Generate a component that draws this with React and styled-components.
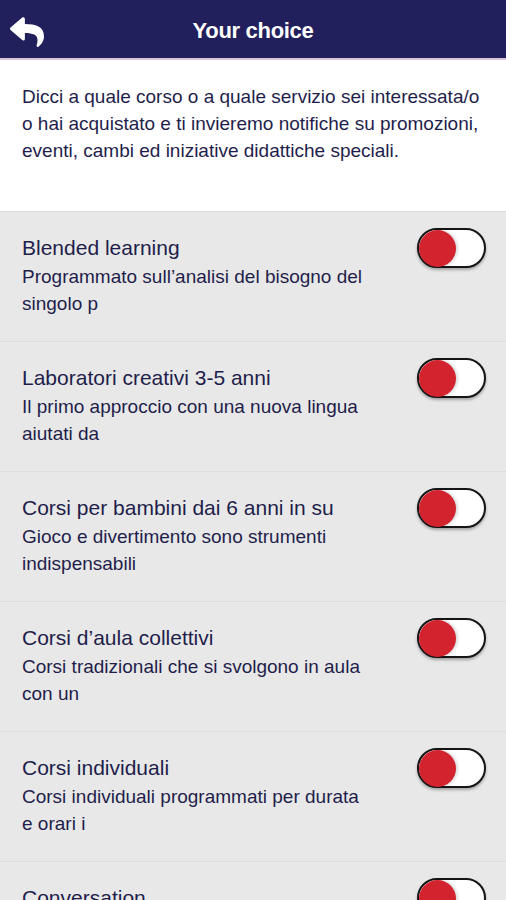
import React from 'react';
import styled, { createGlobalStyle } from 'styled-components';
import { FaReply } from 'react-icons/fa';

const GlobalStyle = createGlobalStyle`
  body {
    margin: 0;
    background: #e8e8e8;
    font-family: "Liberation Sans", Arial, Helvetica, sans-serif;
  }
`;

const Page = styled.div`
  width: 506px;
  min-height: 900px;
  background: #e8e8e8;
`;

const Header = styled.header`
  height: 60px;
  box-sizing: border-box;
  padding-top: 4px;
  background: #221f5d;
  border-bottom: 2px solid #dcc3d5;
  display: flex;
  align-items: center;
  justify-content: center;
  position: relative;
`;

const BackButton = styled.button`
  position: absolute;
  left: 10px;
  top: 15px;
  background: none;
  border: none;
  padding: 0;
  color: #fff;
  display: flex;
  cursor: pointer;
`;

const Title = styled.h1`
  margin: 0;
  color: #fff;
  font-size: 22px;
  font-weight: 700;
  letter-spacing: -0.3px;
`;

const Intro = styled.p`
  margin: 0;
  background: #fff;
  padding: 23px 18px 47px 22px;
  font-size: 19px;
  line-height: 27px;
  color: #1f1e4b;
  border-bottom: 1px solid #dadada;
`;

const Row = styled.div`
  display: flex;
  align-items: flex-start;
  justify-content: space-between;
  padding: 23px 20px 24px 22px;
  border-bottom: 1px solid #dedede;
`;

const Texts = styled.div`
  width: 346px;
`;

const RowTitle = styled.div`
  font-size: 21px;
  line-height: 26px;
  color: #1f1e4b;
  white-space: nowrap;
`;

const RowText = styled.div`
  margin-top: 2px;
  font-size: 19px;
  line-height: 27px;
  color: #1f1e4b;
`;

const Toggle = styled.div`
  margin-top: -7px;
  width: 65px;
  height: 36px;
  border: 2px solid #151515;
  border-radius: 20px;
  background: #fff;
  box-shadow: 0 2px 3px rgba(0, 0, 0, 0.3);
  display: flex;
  align-items: center;
  flex-shrink: 0;
`;

const Knob = styled.div`
  width: 37px;
  height: 37px;
  border-radius: 50%;
  background: ${(p) => (p.$on ? '#d3232f' : '#f4f4f4')};
  box-shadow: 2px 0 3px rgba(0, 0, 0, 0.15);
`;

const items = [
  ['Blended learning', 'Programmato sull’analisi del bisogno del singolo p'],
  ['Laboratori creativi 3-5 anni', 'Il primo approccio con una nuova lingua aiutati da'],
  ['Corsi per bambini dai 6 anni in su', 'Gioco e divertimento sono strumenti indispensabili'],
  ['Corsi d’aula collettivi', 'Corsi tradizionali che si svolgono in aula con un'],
  ['Corsi individuali', 'Corsi individuali programmati per durata e orari i'],
  ['Conversation', 'Corsi di conversazione con insegnanti madrelingua'],
];

export default function App() {
  return (
    <Page>
      <GlobalStyle />
      <Header>
        <BackButton aria-label="Indietro">
          <FaReply size={34} />
        </BackButton>
        <Title>Your choice</Title>
      </Header>
      <Intro>
        Dicci a quale corso o a quale servizio sei interessata/o o hai acquistato e ti invieremo
        notifiche su promozioni, eventi, cambi ed iniziative didattiche speciali.
      </Intro>
      {items.map(([title, text]) => (
        <Row key={title}>
          <Texts>
            <RowTitle>{title}</RowTitle>
            <RowText>{text}</RowText>
          </Texts>
          <Toggle>
            <Knob $on />
          </Toggle>
        </Row>
      ))}
    </Page>
  );
}
